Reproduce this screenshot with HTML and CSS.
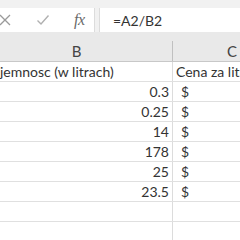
FILE: index.html
```html
<!DOCTYPE html>
<html>
<head>
<meta charset="utf-8">
<link rel="stylesheet" href="styles.css">
</head>
<body>
<div class="app">
  <div class="topstrip"></div>
  <div class="fbar">
    <div class="fbtns">
      <svg class="ic ic-x" width="14" height="14" viewBox="0 0 14 14"><path d="M2 2 L12 12 M12 2 L2 12" stroke="#9a9a9a" stroke-width="1.3" fill="none"/></svg>
      <svg class="ic ic-ok" width="14" height="14" viewBox="0 0 14 14"><path d="M1.5 7.5 L5 11 L12.5 2.5" stroke="#b0b0b0" stroke-width="1.4" fill="none"/></svg>
      <span class="fx">fx</span>
    </div>
    <div class="finput">=A2/B2</div>
  </div>
  <div class="gap"></div>
  <div class="sheet">
    <div class="row head">
      <div class="cell colb hcell">B</div>
      <div class="cell colc hcell">C</div>
    </div>
    <div class="row">
      <div class="cell colb txt">Pojemnosc (w litrach)</div>
      <div class="cell colc txt">Cena za litr</div>
    </div>
    <div class="row">
      <div class="cell colb num">0.3</div>
      <div class="cell colc cur">$</div>
    </div>
    <div class="row">
      <div class="cell colb num">0.25</div>
      <div class="cell colc cur">$</div>
    </div>
    <div class="row">
      <div class="cell colb num">14</div>
      <div class="cell colc cur">$</div>
    </div>
    <div class="row">
      <div class="cell colb num">178</div>
      <div class="cell colc cur">$</div>
    </div>
    <div class="row">
      <div class="cell colb num">25</div>
      <div class="cell colc cur">$</div>
    </div>
    <div class="row">
      <div class="cell colb num">23.5</div>
      <div class="cell colc cur">$</div>
    </div>
    <div class="row">
      <div class="cell colb"></div>
      <div class="cell colc"></div>
    </div>
    <div class="row">
      <div class="cell colb"></div>
      <div class="cell colc"></div>
    </div>
  </div>
</div>
</body>
</html>
```
FILE: styles.css
```css
html, body {
  margin: 0;
  padding: 0;
  width: 240px;
  height: 240px;
  overflow: hidden;
  background: #ffffff;
  font-family: Lato, "Liberation Sans", sans-serif;
}
.app {
  width: 240px;
  overflow: hidden;
}
.topstrip {
  height: 8px;
  background: #f1f1f1;
}
.fbar {
  display: flex;
  height: 24px;
  background: #f1f1f1;
}
.fbtns {
  width: 99px;
  margin-left: -4px;
  flex: none;
  box-sizing: border-box;
  background: #fff;
  border-right: 1px solid #dcdcdc;
  display: flex;
  align-items: center;
}
.ic-x { margin-left: 2px; }
.ic-ok { margin-left: 24px; }
.fx {
  margin-left: 24px;
  font-family: "Liberation Serif", serif;
  font-style: italic;
  font-size: 16px;
  color: #6a6a6a;
  letter-spacing: -0.5px;
}
.finput {
  margin-left: 4px;
  flex: 1;
  background: #fff;
  border-left: 1px solid #dcdcdc;
  display: flex;
  align-items: center;
  padding-left: 13px;
  font-size: 14px;
  color: #333;
}
.gap {
  height: 9px;
  background: #e9e9e9;
}
.sheet {
  margin-left: -19px;
}
.row {
  display: flex;
  height: 20px;
  box-sizing: border-box;
  border-bottom: 1px solid #e0e0e0;
}
.row.head {
  height: 21px;
  background: #e9e9e9;
  border-bottom: 1px solid #c8c8c8;
}
.cell {
  flex: none;
  box-sizing: border-box;
  font-size: 14px;
  line-height: 20px;
  color: #333;
  white-space: nowrap;
  overflow: visible;
}
.colb {
  width: 192px;
  border-right: 1px solid #dcdcdc;
}
.colc {
  width: 118px;
}
.head .colb {
  border-right: 1px solid #c0c0c0;
}
.hcell {
  text-align: center;
  color: #444;
  font-size: 15px;
  line-height: 20px;
}
.txt {
  padding-left: 3px;
}
.cur {
  padding-left: 8px;
}
.num {
  text-align: right;
  padding-right: 3px;
}
```
